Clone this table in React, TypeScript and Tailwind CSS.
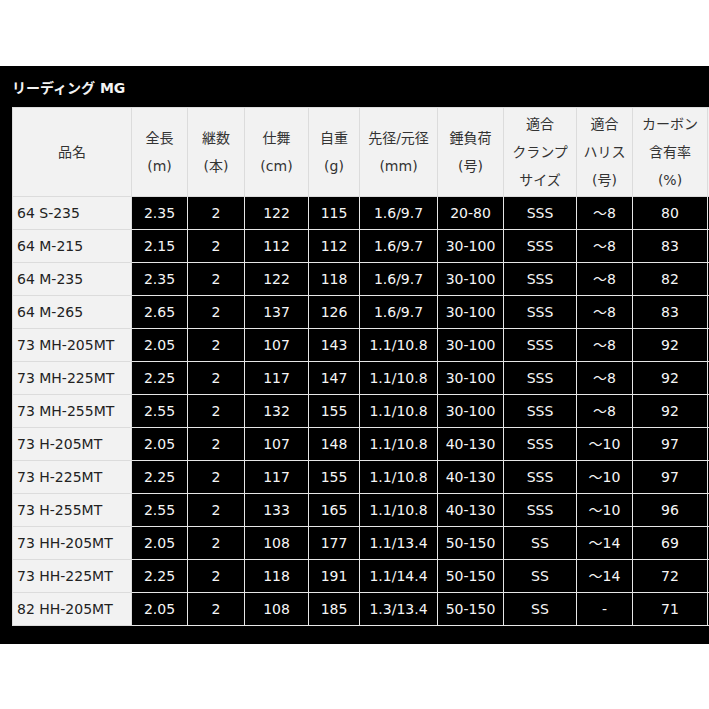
import React from "react";

const headers: string[][] = [
  ["品名"],
  ["全長", "(m)"],
  ["継数", "(本)"],
  ["仕舞", "(cm)"],
  ["自重", "(g)"],
  ["先径/元径", "(mm)"],
  ["錘負荷", "(号)"],
  ["適合", "クランプ", "サイズ"],
  ["適合", "ハリス", "(号)"],
  ["カーボン", "含有率", "(%)"],
  [],
];

const rows: string[][] = [
  ["64 S-235", "2.35", "2", "122", "115", "1.6/9.7", "20-80", "SSS", "～8", "80", ""],
  ["64 M-215", "2.15", "2", "112", "112", "1.6/9.7", "30-100", "SSS", "～8", "83", ""],
  ["64 M-235", "2.35", "2", "122", "118", "1.6/9.7", "30-100", "SSS", "～8", "82", ""],
  ["64 M-265", "2.65", "2", "137", "126", "1.6/9.7", "30-100", "SSS", "～8", "83", ""],
  ["73 MH-205MT", "2.05", "2", "107", "143", "1.1/10.8", "30-100", "SSS", "～8", "92", ""],
  ["73 MH-225MT", "2.25", "2", "117", "147", "1.1/10.8", "30-100", "SSS", "～8", "92", ""],
  ["73 MH-255MT", "2.55", "2", "132", "155", "1.1/10.8", "30-100", "SSS", "～8", "92", ""],
  ["73 H-205MT", "2.05", "2", "107", "148", "1.1/10.8", "40-130", "SSS", "～10", "97", ""],
  ["73 H-225MT", "2.25", "2", "117", "155", "1.1/10.8", "40-130", "SSS", "～10", "97", ""],
  ["73 H-255MT", "2.55", "2", "133", "165", "1.1/10.8", "40-130", "SSS", "～10", "96", ""],
  ["73 HH-205MT", "2.05", "2", "108", "177", "1.1/13.4", "50-150", "SS", "～14", "69", ""],
  ["73 HH-225MT", "2.25", "2", "118", "191", "1.1/14.4", "50-150", "SS", "～14", "72", ""],
  ["82 HH-205MT", "2.05", "2", "108", "185", "1.3/13.4", "50-150", "SS", "-", "71", ""],
];

const widths = [119, 56, 57, 64, 51, 78, 66, 73, 56, 75, 80];

export default function App() {
  return (
    <div
      className="w-[709px] h-[709px] overflow-hidden bg-white pt-[66px]"
      style={{ fontFamily: '"DejaVu Sans", "Noto Sans CJK JP", sans-serif' }}
    >
      <div className="w-[709px] overflow-hidden bg-black pb-[18px]">
        <div className="flex h-[41px] items-center pl-[12px] pt-[3px] text-[14px] font-bold text-[#f4f4f4]">
          リーディング MG
        </div>
        <table className="ml-[12px] w-[775px] table-fixed border-collapse text-[14px]">
          <colgroup>
            {widths.map((w, i) => (
              <col key={i} style={{ width: w }} />
            ))}
          </colgroup>
          <thead>
            <tr>
              {headers.map((h, i) => (
                <th
                  key={i}
                  className="h-[89px] border border-[#dcdcdc] bg-[#f2f2f2] p-0 text-center align-middle font-normal leading-[28px] text-[#333]"
                >
                  {h.map((line, j) => (
                    <div key={j}>{line}</div>
                  ))}
                </th>
              ))}
            </tr>
          </thead>
          <tbody>
            {rows.map((r, ri) => (
              <tr key={ri}>
                {r.map((c, ci) =>
                  ci === 0 ? (
                    <td
                      key={ci}
                      className="h-[33px] whitespace-nowrap border border-[#dcdcdc] bg-[#f2f2f2] py-0 pl-[4px] pr-0 text-left align-middle text-[#222]"
                    >
                      {c}
                    </td>
                  ) : (
                    <td
                      key={ci}
                      className="h-[33px] whitespace-nowrap border border-[#e6e6e6] bg-black p-0 text-center align-middle text-[#f6f6f6]"
                    >
                      {c}
                    </td>
                  )
                )}
              </tr>
            ))}
          </tbody>
        </table>
      </div>
    </div>
  );
}
